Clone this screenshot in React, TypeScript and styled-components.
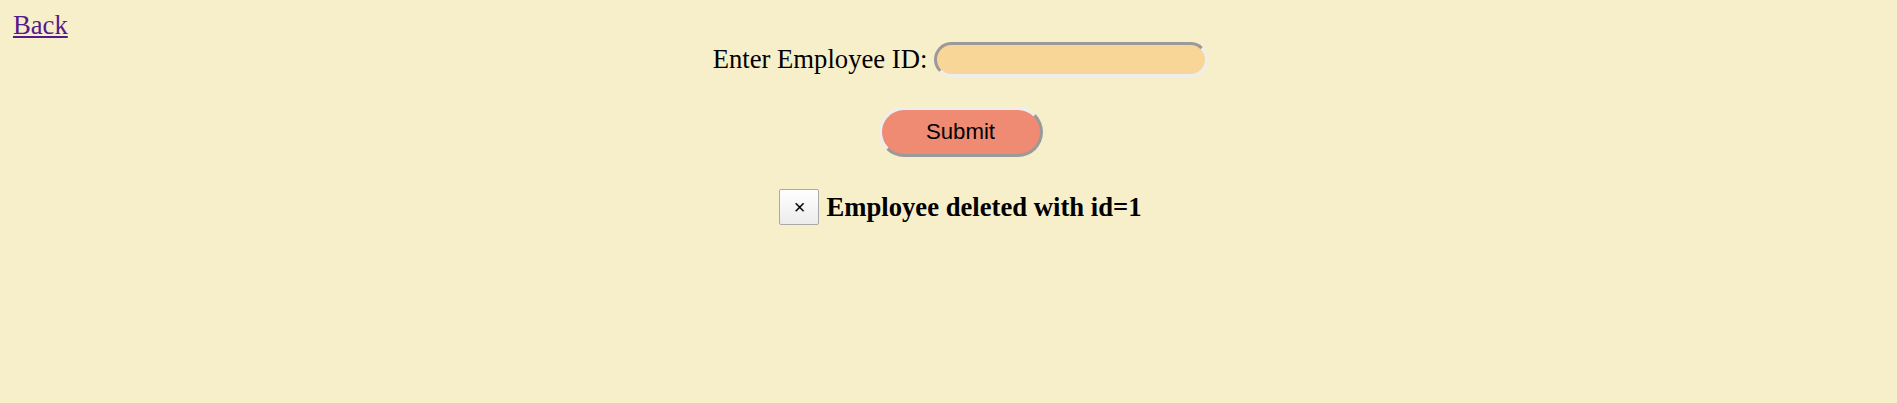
import React from 'react';
import styled, { createGlobalStyle } from 'styled-components';

const GlobalStyle = createGlobalStyle`
    html, body {
        margin: 0;
        padding: 0;
        background: #f7efc9;
    }
    body {
        font-family: "Liberation Serif", "Times New Roman", serif;
        color: #000;
    }
`;

const Page = styled.div`
    padding: 10px 13px 0 13px;
    min-height: 393px;
    box-sizing: border-box;
`;

const BackLink = styled.a`
    display: inline-block;
    font-size: 26.67px;
    line-height: 30px;
    color: #551a8b;
    text-decoration: underline;
`;

const Form = styled.form`
    display: flex;
    flex-direction: column;
    align-items: center;
    padding-left: 24px;
    margin-top: 2px;
`;

const Row = styled.div`
    display: flex;
    align-items: center;
    gap: 7px;
`;

const Label = styled.label`
    font-size: 26.67px;
    line-height: 35px;
`;

const IdInput = styled.input`
    width: 274px;
    height: 35px;
    box-sizing: border-box;
    border: 3px solid #eeeeee;
    border-top-color: #9a9a9a;
    border-left-color: #9a9a9a;
    border-radius: 18px;
    background: #f8d697;
    outline: none;
    padding: 0 12px;
    font-size: 22px;
`;

const SubmitButton = styled.button`
    margin-top: 30px;
    width: 164px;
    height: 50px;
    box-sizing: border-box;
    border: 3px solid #9a9a9a;
    border-top-color: #eeeeee;
    border-left-color: #eeeeee;
    border-radius: 25px;
    background: #ef8a73;
    font-family: "Liberation Sans", Arial, sans-serif;
    font-size: 22.2px;
    color: #000;
    cursor: pointer;
`;

const Message = styled.div`
    margin-top: 32px;
    display: flex;
    align-items: center;
    gap: 7px;
`;

const CloseButton = styled.button`
    width: 40px;
    height: 36px;
    box-sizing: border-box;
    border: 1px solid #a9a9a9;
    border-radius: 2px;
    background: linear-gradient(#ffffff, #ececec);
    font-family: "Liberation Sans", Arial, sans-serif;
    font-size: 20px;
    line-height: 1;
    color: #000;
    padding: 0;
`;

const MessageText = styled.strong`
    font-size: 26.67px;
    line-height: 36px;
`;

export default function App(): JSX.Element {
    const [id, setId] = React.useState('');

    return (
        <>
            <GlobalStyle />
            <Page>
                <BackLink href="#">Back</BackLink>
                <Form onSubmit={(e) => e.preventDefault()}>
                    <Row>
                        <Label htmlFor="empId">Enter Employee ID:</Label>
                        <IdInput id="empId" value={id} onChange={(e) => setId(e.target.value)} />
                    </Row>
                    <SubmitButton type="submit">Submit</SubmitButton>
                    <Message>
                        <CloseButton type="button">×</CloseButton>
                        <MessageText>Employee deleted with id=1</MessageText>
                    </Message>
                </Form>
            </Page>
        </>
    );
}
